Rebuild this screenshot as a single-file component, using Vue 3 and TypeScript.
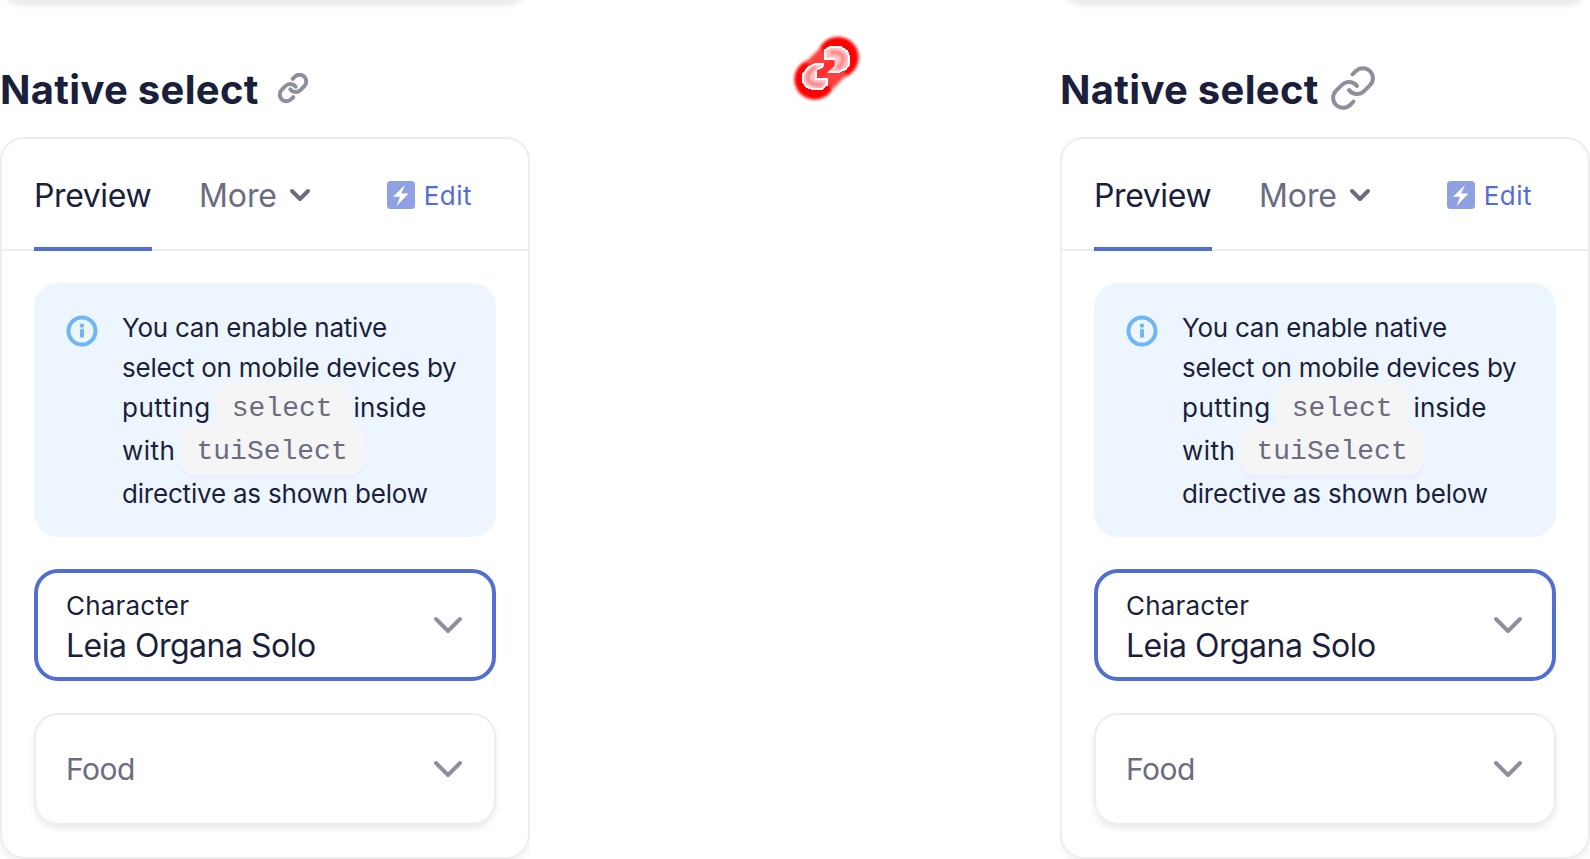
<script setup lang="ts">
interface Column {
  id: string
  size: 'small' | 'large'
  stroke: number
}

const columns: Column[] = [
  { id: 'before', size: 'small', stroke: 3 },
  { id: 'after', size: 'large', stroke: 2 },
]
</script>

<template>
  <main class="stage">
    <section v-for="column in columns" :key="column.id" class="column" :class="column.id">
      <div class="previous"></div>
      <h2 class="heading" :class="column.size">
        <span class="title">Native select</span>
        <svg class="link" viewBox="0 0 24 24" fill="none" stroke="currentColor" :stroke-width="column.stroke" stroke-linecap="round" stroke-linejoin="round">
          <path d="M10 13a5 5 0 0 0 7.54.54l3-3a5 5 0 0 0-7.07-7.07l-1.72 1.71" />
          <path d="M14 11a5 5 0 0 0-7.54-.54l-3 3a5 5 0 0 0 7.07 7.07l1.71-1.71" />
        </svg>
      </h2>

      <article class="panel">
        <nav class="tabs">
          <span class="tab active">Preview</span>
          <span class="tab more">
            More
            <svg viewBox="0 0 24 24" fill="none" stroke="currentColor" stroke-width="4" stroke-linecap="round" stroke-linejoin="round">
              <path d="m4 8 8 8 8-8" />
            </svg>
          </span>
          <span class="edit">
            <svg viewBox="0 0 28 28">
              <rect width="28" height="28" rx="3.5" fill="#8fa1e3" />
              <path d="M18 4 6 15.700h7L9.600 25 21.500 12.400h-7.300z" fill="#fff" />
            </svg>
            Edit
          </span>
        </nav>

        <div class="body">
          <div class="notice">
            <svg class="info" viewBox="0 0 32 32" fill="none" stroke="#70b6f6" stroke-width="4">
              <circle cx="16" cy="16" r="13.500" />
              <path d="M16 15.500v5.500" stroke-linecap="round" />
              <circle cx="16" cy="10.600" r="2.200" fill="#70b6f6" stroke="none" />
            </svg>
            <div class="message">
              <div class="line"><span class="tight">You can enable native</span></div>
              <div class="line"><span class="tight">select on mobile devices by</span></div>
              <div class="line tall"><span class="loose">putting</span><code>select</code><span>inside</span></div>
              <div class="line tall"><span class="loose">with</span><code>tuiSelect</code></div>
              <div class="line"><span class="directive">directive as shown below</span></div>
            </div>
          </div>

          <div class="field focused">
            <div class="content">
              <label>Character</label>
              <span class="value">Leia Organa Solo</span>
            </div>
            <svg class="chevron" viewBox="0 0 32 32"><path d="m4 10 12 12 12-12" /></svg>
          </div>

          <div class="field">
            <span class="placeholder">Food</span>
            <svg class="chevron" viewBox="0 0 32 32"><path d="m4 10 12 12 12-12" /></svg>
          </div>
        </div>
      </article>
    </section>

    <div class="difference">
      <svg viewBox="0 0 330 300">
        <defs>
          <filter id="glow" x="-20%" y="-20%" width="140%" height="140%">
            <feGaussianBlur stdDeviation="5" />
          </filter>
          <filter id="soft" x="-20%" y="-20%" width="140%" height="140%">
            <feGaussianBlur stdDeviation="4" />
          </filter>
        </defs>
        <g filter="url(#glow)">
          <circle cx="134" cy="178" r="61" fill="#f00" />
          <circle cx="204" cy="112" r="62" fill="#f00" />
          <path d="M148 166 190 125" stroke="#ff4040" stroke-width="114" />
        </g>
        <g fill="#ffc9cc" stroke="#fff" stroke-width="6" shape-rendering="crispEdges">
          <path d="M165 117V90l14-8h34l18 12 6 14v28l-10 11-18 8h-34v-8l18-7v-22z" />
          <path d="M158 132h-24l-22 13-12 17v24l7 13 17 7h32l15-12v-18h-33v-25l20-12z" />
        </g>
        <g filter="url(#soft)" fill="none" stroke="#ff7a80" stroke-width="11">
          <path d="M180 98q32-5 40 14 0 24-20 34" />
          <path d="M139 143q-25 7-26 30 3 25 46 20" />
        </g>
        <path d="M141 173v-23l16-4 10-20 27-6v17l-20 19-18 17z" fill="#ff2f2f" />
      </svg>
    </div>
  </main>
</template>

<style>
body {
  margin: 0;
  background: #fff;
}
</style>

<style scoped>
.stage {
  display: grid;
  grid-template-columns: repeat(3, 530px);
  width: 1590px;
  height: 859px;
  overflow: hidden;
  background: #fff;
  color: #1b1f3b;
  font-family: Inter, "Liberation Sans", sans-serif;
}

.column,
.difference {
  grid-row: 1;
  height: 859px;
  overflow: hidden;
}

.before {
  grid-column: 1;
}

.difference {
  grid-column: 2;
}

.after {
  grid-column: 3;
}

.difference svg {
  display: block;
  width: 110px;
  height: 100px;
  margin: 20px 0 0 240px;
}

.previous {
  box-sizing: border-box;
  height: 60px;
  margin-top: -59px;
  border: 2px solid #ededed;
  border-radius: 24px;
  box-shadow: 0 4px 6px rgba(0, 0, 0, 0.1);
}

.heading {
  display: flex;
  align-items: center;
  gap: 18px;
  height: 48px;
  margin: 63px 0 25px;
  font-size: 40px;
  line-height: 48px;
  font-weight: 700;
  letter-spacing: 0.3px;
}

.heading.large {
  gap: 10px;
}

.title {
  padding-top: 4px;
}

.link {
  width: 32px;
  height: 32px;
  color: #8d8f9f;
}

.large .link {
  width: 48px;
  height: 48px;
}

.panel {
  box-sizing: border-box;
  height: 722px;
  border: 2px solid #ededed;
  border-radius: 24px;
  box-shadow: 0 4px 6px rgba(0, 0, 0, 0.06);
}

.tabs {
  display: flex;
  height: 112px;
  padding: 0 32px;
  box-shadow: inset 0 -2px #ededed;
}

.tab {
  box-sizing: border-box;
  padding-top: 37px;
  font-size: 32px;
  line-height: 40px;
}

.active {
  width: 118px;
  border-bottom: 4px solid #526ed3;
  letter-spacing: -0.4px;
}

.more {
  display: flex;
  gap: 11px;
  margin-left: 47px;
  color: #6b6c80;
  letter-spacing: -0.1px;
}

.more svg {
  width: 24px;
  height: 24px;
  margin-top: 7px;
}

.edit {
  display: flex;
  gap: 9px;
  margin-left: auto;
  padding: 37px 24px 0 0;
  color: #526ed3;
  font-size: 26px;
  line-height: 40px;
  letter-spacing: 0.5px;
}

.edit svg {
  width: 28px;
  height: 28px;
  margin-top: 5px;
}

.body {
  display: flex;
  flex-direction: column;
  gap: 32px;
  padding: 32px;
}

.notice {
  box-sizing: border-box;
  display: flex;
  gap: 24px;
  height: 254px;
  padding: 25px 24px 0 32px;
  border-radius: 24px;
  background: #edf6ff;
}

.info {
  flex: none;
  width: 32px;
  height: 32px;
  margin-top: 7px;
}

.message {
  font-size: 26px;
  font-weight: 400;
  white-space: nowrap;
}

.line {
  display: flex;
  gap: 5px;
  height: 40px;
  line-height: 40px;
}

.line.tall {
  height: 43px;
}

.tight {
  letter-spacing: -0.25px;
}

.loose {
  letter-spacing: 0.5px;
}

.directive {
  letter-spacing: -0.2px;
}

code {
  box-sizing: border-box;
  height: 50px;
  margin-top: -6px;
  padding: 2px 16px 0;
  border-radius: 16px;
  background: #f5f5f6;
  box-shadow: 0 4px #ebeeff;
  color: #6b6c80;
  font: 400 28px/50px "Liberation Mono", monospace;
}

.field {
  box-sizing: border-box;
  display: flex;
  align-items: center;
  justify-content: space-between;
  height: 112px;
  padding: 0 30px;
  border: 2px solid #ededed;
  border-radius: 24px;
  box-shadow: 0 4px 6px rgba(0, 0, 0, 0.08);
}

.focused {
  padding: 0 28px;
  border: 4px solid #526ed3;
  box-shadow: none;
}

.content {
  display: flex;
  flex-direction: column;
  padding-top: 2px;
}

label {
  font-size: 26px;
  line-height: 40px;
  letter-spacing: 0.2px;
}

.value {
  font-size: 32px;
  line-height: 40px;
  letter-spacing: -0.5px;
}

.placeholder {
  color: #6b6c80;
  font-size: 30px;
  line-height: 40px;
  letter-spacing: -0.5px;
}

.chevron {
  width: 32px;
  height: 32px;
  fill: none;
  stroke: #8d8f9f;
  stroke-width: 4;
  stroke-linecap: round;
  stroke-linejoin: round;
}
</style>
